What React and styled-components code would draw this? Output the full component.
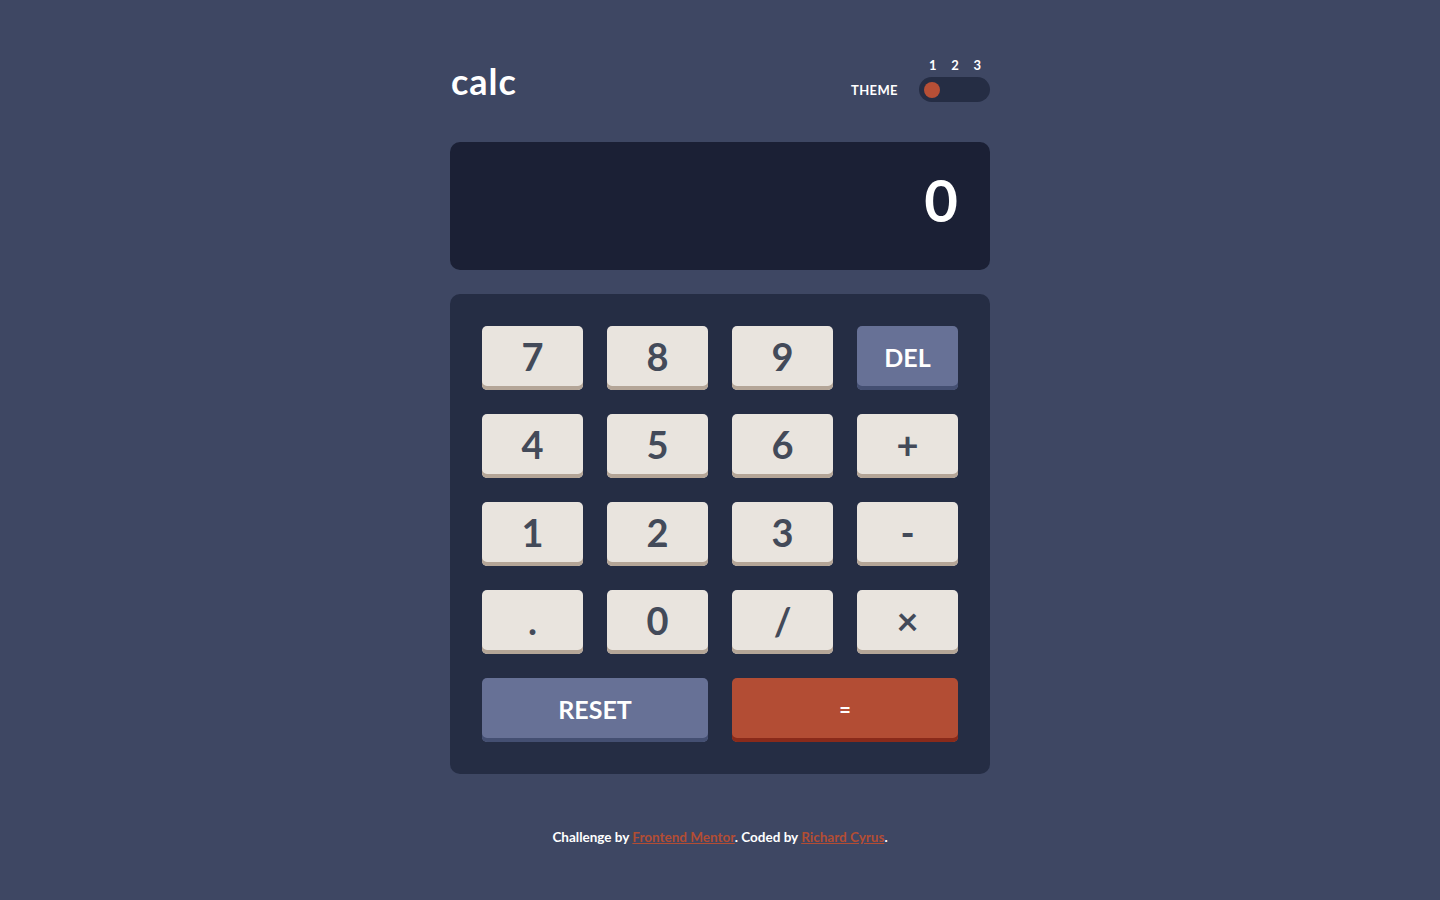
import React from 'react'
import styled, { createGlobalStyle } from 'styled-components'

const GlobalStyle = createGlobalStyle`
  * { box-sizing: border-box; }
  body {
    margin: 0;
    background: #3e4763;
    font-family: "Lato", "Noto Sans", sans-serif;
    color: #ffffff;
  }
`

const Page = styled.div`
  width: 540px;
  margin: 0 auto;
  padding-top: 57px;
`

const Header = styled.header`
  display: flex;
  justify-content: space-between;
  align-items: flex-end;
  margin-bottom: 40px;
`

const Logo = styled.h1`
  margin: 0 0 0 1px;
  font-size: 36px;
  font-weight: 700;
  letter-spacing: 1px;
  line-height: 1;
  padding-bottom: 3px;
`

const Theme = styled.div`
  display: flex;
  align-items: flex-end;
  gap: 21px;
`

const ThemeLabel = styled.span`
  font-size: 13px;
  font-weight: 700;
  letter-spacing: 0.4px;
  margin-bottom: 4px;
`

const Switch = styled.div`
  display: flex;
  flex-direction: column;
  gap: 4px;
`

const Numbers = styled.div`
  display: flex;
  justify-content: space-between;
  padding: 0 9px 0 10px;
  font-size: 13px;
  font-weight: 700;
`

const Track = styled.div`
  width: 71px;
  height: 25px;
  border-radius: 13px;
  background: #252d44;
  padding: 4px 5px;
  display: flex;
  align-items: center;
`

const Knob = styled.div`
  width: 16px;
  height: 16px;
  border-radius: 50%;
  background: #b64f36;
`

const Screen = styled.div`
  height: 128px;
  border-radius: 10px;
  background: #1b2035;
  display: flex;
  justify-content: flex-end;
  align-items: center;
  padding: 0 32px 14px;
  font-size: 58px;
  font-weight: 700;
  margin-bottom: 24px;
`

const Keypad = styled.div`
  background: #252d44;
  border-radius: 10px;
  padding: 32px;
  display: grid;
  grid-template-columns: repeat(4, 101px);
  gap: 24px;
`

const Key = styled.button`
  grid-column: span ${p => p.$span || 1};
  height: 64px;
  border: none;
  border-radius: 5px;
  cursor: pointer;
  font-family: inherit;
  font-weight: 700;
  padding: ${p => (p.$variant ? '2px' : '0')} 0 4px;
  font-size: ${p => (p.$variant ? '25px' : '38px')};
  color: ${p => (p.$variant ? '#ffffff' : '#434a59')};
  background: ${p =>
    p.$variant === 'accent' ? '#b34d34' : p.$variant === 'muted' ? '#677196' : '#e9e4de'};
  box-shadow: inset 0 -4px 0
    ${p => (p.$variant === 'accent' ? '#8a2a1a' : p.$variant === 'muted' ? '#444f72' : '#b4a597')};
`

const Footer = styled.footer`
  margin-top: 55px;
  text-align: center;
  font-size: 13.5px;
  font-weight: 700;

  a {
    color: #b34d34;
    text-decoration: underline;
  }
`

const keys = [
  ['7'], ['8'], ['9'], ['DEL', 'muted'],
  ['4'], ['5'], ['6'], ['+'],
  ['1'], ['2'], ['3'], ['-'],
  ['.'], ['0'], ['/'], ['×'],
]

export default function App() {
  return (
    <Page>
      <GlobalStyle />
      <Header>
        <Logo>calc</Logo>
        <Theme>
          <ThemeLabel>THEME</ThemeLabel>
          <Switch>
            <Numbers>
              <span>1</span>
              <span>2</span>
              <span>3</span>
            </Numbers>
            <Track>
              <Knob />
            </Track>
          </Switch>
        </Theme>
      </Header>
      <Screen>0</Screen>
      <Keypad>
        {keys.map(([label, variant]) => (
          <Key key={label} $variant={variant}>{label}</Key>
        ))}
        <Key $span={2} $variant="muted">RESET</Key>
        <Key $span={2} $variant="accent" style={{ fontSize: '20px' }}>=</Key>
      </Keypad>
      <Footer>
        Challenge by <a href="#">Frontend Mentor</a>. Coded by <a href="#">Richard Cyrus</a>.
      </Footer>
    </Page>
  )
}
